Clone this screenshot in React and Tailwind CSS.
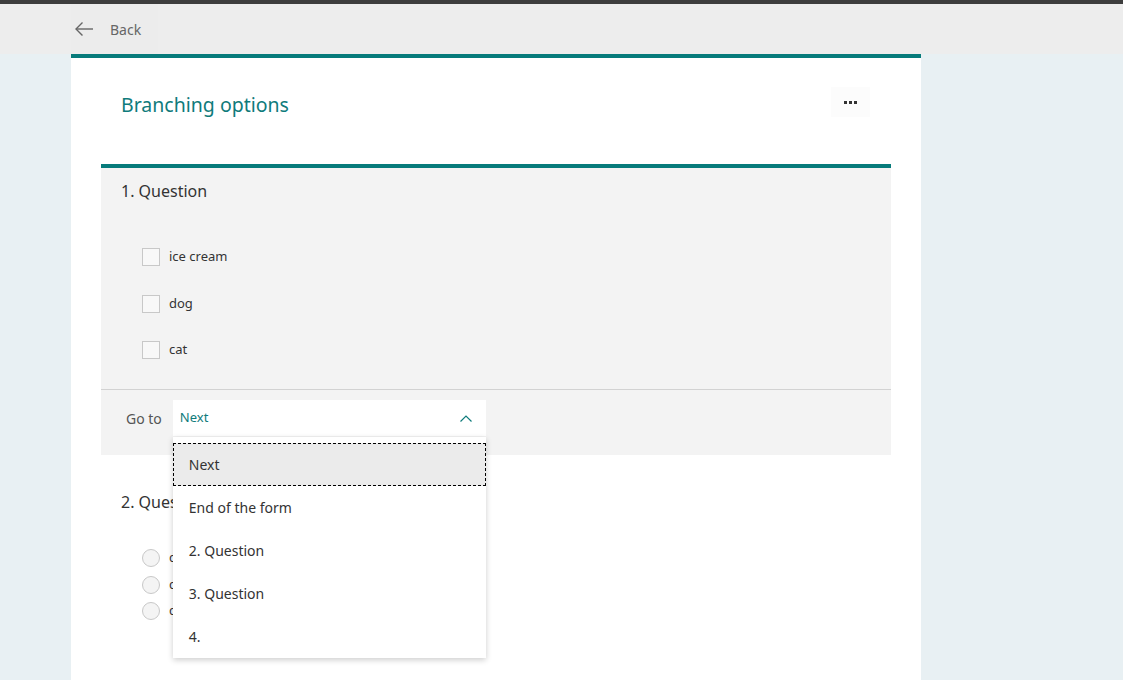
import { useState } from 'react';

const OPTIONS_1 = ['ice cream', 'dog', 'cat'];
const GOTO_ITEMS = ['Next', 'End of the form', '2. Question', '3. Question', '4.'];

function BackArrow() {
  return (
    <svg width="20" height="16" viewBox="0 0 20 16" fill="none" stroke="#666" strokeWidth="1.4">
      <path d="M19 8H2" />
      <path d="M8.5 1.5L2 8l6.5 6.5" />
    </svg>
  );
}

function ChevronUp() {
  return (
    <svg width="12" height="7" viewBox="0 0 12 7" fill="none" stroke="#0f7b7b" strokeWidth="1.2">
      <path d="M0.5 6.5L6 1l5.5 5.5" />
    </svg>
  );
}

function GotoDropdown() {
  const [active] = useState(0);
  return (
    <div className="absolute left-0 top-[37px] z-10 w-[313px] bg-white pt-[6px] shadow-[0_2px_6px_rgba(0,0,0,0.2)]">
      {GOTO_ITEMS.map((label, i) => (
        <div
          key={label}
          className={
            i === active
              ? 'flex h-[43px] items-center border border-dashed border-black bg-[#ebebeb] pl-[15px] text-[14px] text-[#333]'
              : 'flex h-[43px] items-center pl-[16px] text-[14px] text-[#333]'
          }
        >
          {label}
        </div>
      ))}
    </div>
  );
}

export default function App() {
  return (
    <div
      className="h-[680px] w-[1123px] overflow-hidden bg-[#e8f0f3]"
      style={{ fontFamily: '"Noto Sans", "Open Sans", sans-serif' }}
    >
      <div className="h-[4px] bg-[#3d3d3d]" />
      <header className="flex h-[50px] items-center bg-[#ededed] pl-[71px]">
        <button type="button" className="flex h-full items-center gap-[16px] bg-[#ececec] pl-[3px] pr-[17px] text-[14px] text-[#666]">
          <BackArrow />
          <span>Back</span>
        </button>
      </header>

      <main className="ml-[71px] min-h-[626px] w-[850px] border-t-4 border-[#077b7b] bg-white">
        <div className="flex h-[106px] items-start justify-between pl-[50px] pr-[51px] pt-[33px]">
          <h1 className="text-[19.5px] leading-[28px] text-[#0f7b7b]">Branching options</h1>
          <button type="button" className="mt-[-4px] flex h-[30px] w-[39px] items-center justify-center gap-[2px] bg-[#fcfcfc]">
            <span className="h-[3px] w-[3px] bg-[#333]" />
            <span className="h-[3px] w-[3px] bg-[#333]" />
            <span className="h-[3px] w-[3px] bg-[#333]" />
          </button>
        </div>

        <section className="mx-[30px] border-t-4 border-[#077b7b] bg-[#f3f3f3]">
          <div className="h-[221px] pl-[20px] pt-[11px]">
            <h2 className="text-[16px] leading-[24px] text-[#333]">1. Question</h2>
            <ul className="mt-[45px] flex flex-col gap-[28.5px] pl-[21px]">
              {OPTIONS_1.map((opt) => (
                <li key={opt} className="flex h-[18px] items-center gap-[9px]">
                  <span className="h-[18px] w-[18px] border border-[#c8c8c8] bg-[#f8f8f8]" />
                  <span className="text-[13px] text-[#333]">{opt}</span>
                </li>
              ))}
            </ul>
          </div>
          <div className="flex h-[66px] items-start border-t border-[#d2d2d2] pl-[25px] pt-[10px]">
            <span className="mr-[11px] flex h-[36px] items-center text-[14px] text-[#555]">Go to</span>
            <div className="relative">
              <div className="flex h-[36px] w-[313px] items-center justify-between bg-white pl-[7px] pr-[14px]">
                <span className="text-[13px] text-[#0f7b7b]">Next</span>
                <ChevronUp />
              </div>
              <GotoDropdown />
            </div>
          </div>
        </section>

        <section className="mx-[30px] pl-[20px] pt-[35px]">
          <h2 className="text-[16px] leading-[24px] text-[#333]">2. Question</h2>
          <ul className="mt-[35px] flex flex-col gap-[8.5px] pl-[21px]">
            {['cat', 'cow', 'chicken'].map((opt) => (
              <li key={opt} className="flex h-[18px] items-center gap-[9px]">
                <span className="h-[18px] w-[18px] rounded-full border border-[#c8c8c8] bg-[#f4f4f4]" />
                <span className="text-[13px] text-[#333]">{opt}</span>
              </li>
            ))}
          </ul>
        </section>
      </main>
    </div>
  );
}
